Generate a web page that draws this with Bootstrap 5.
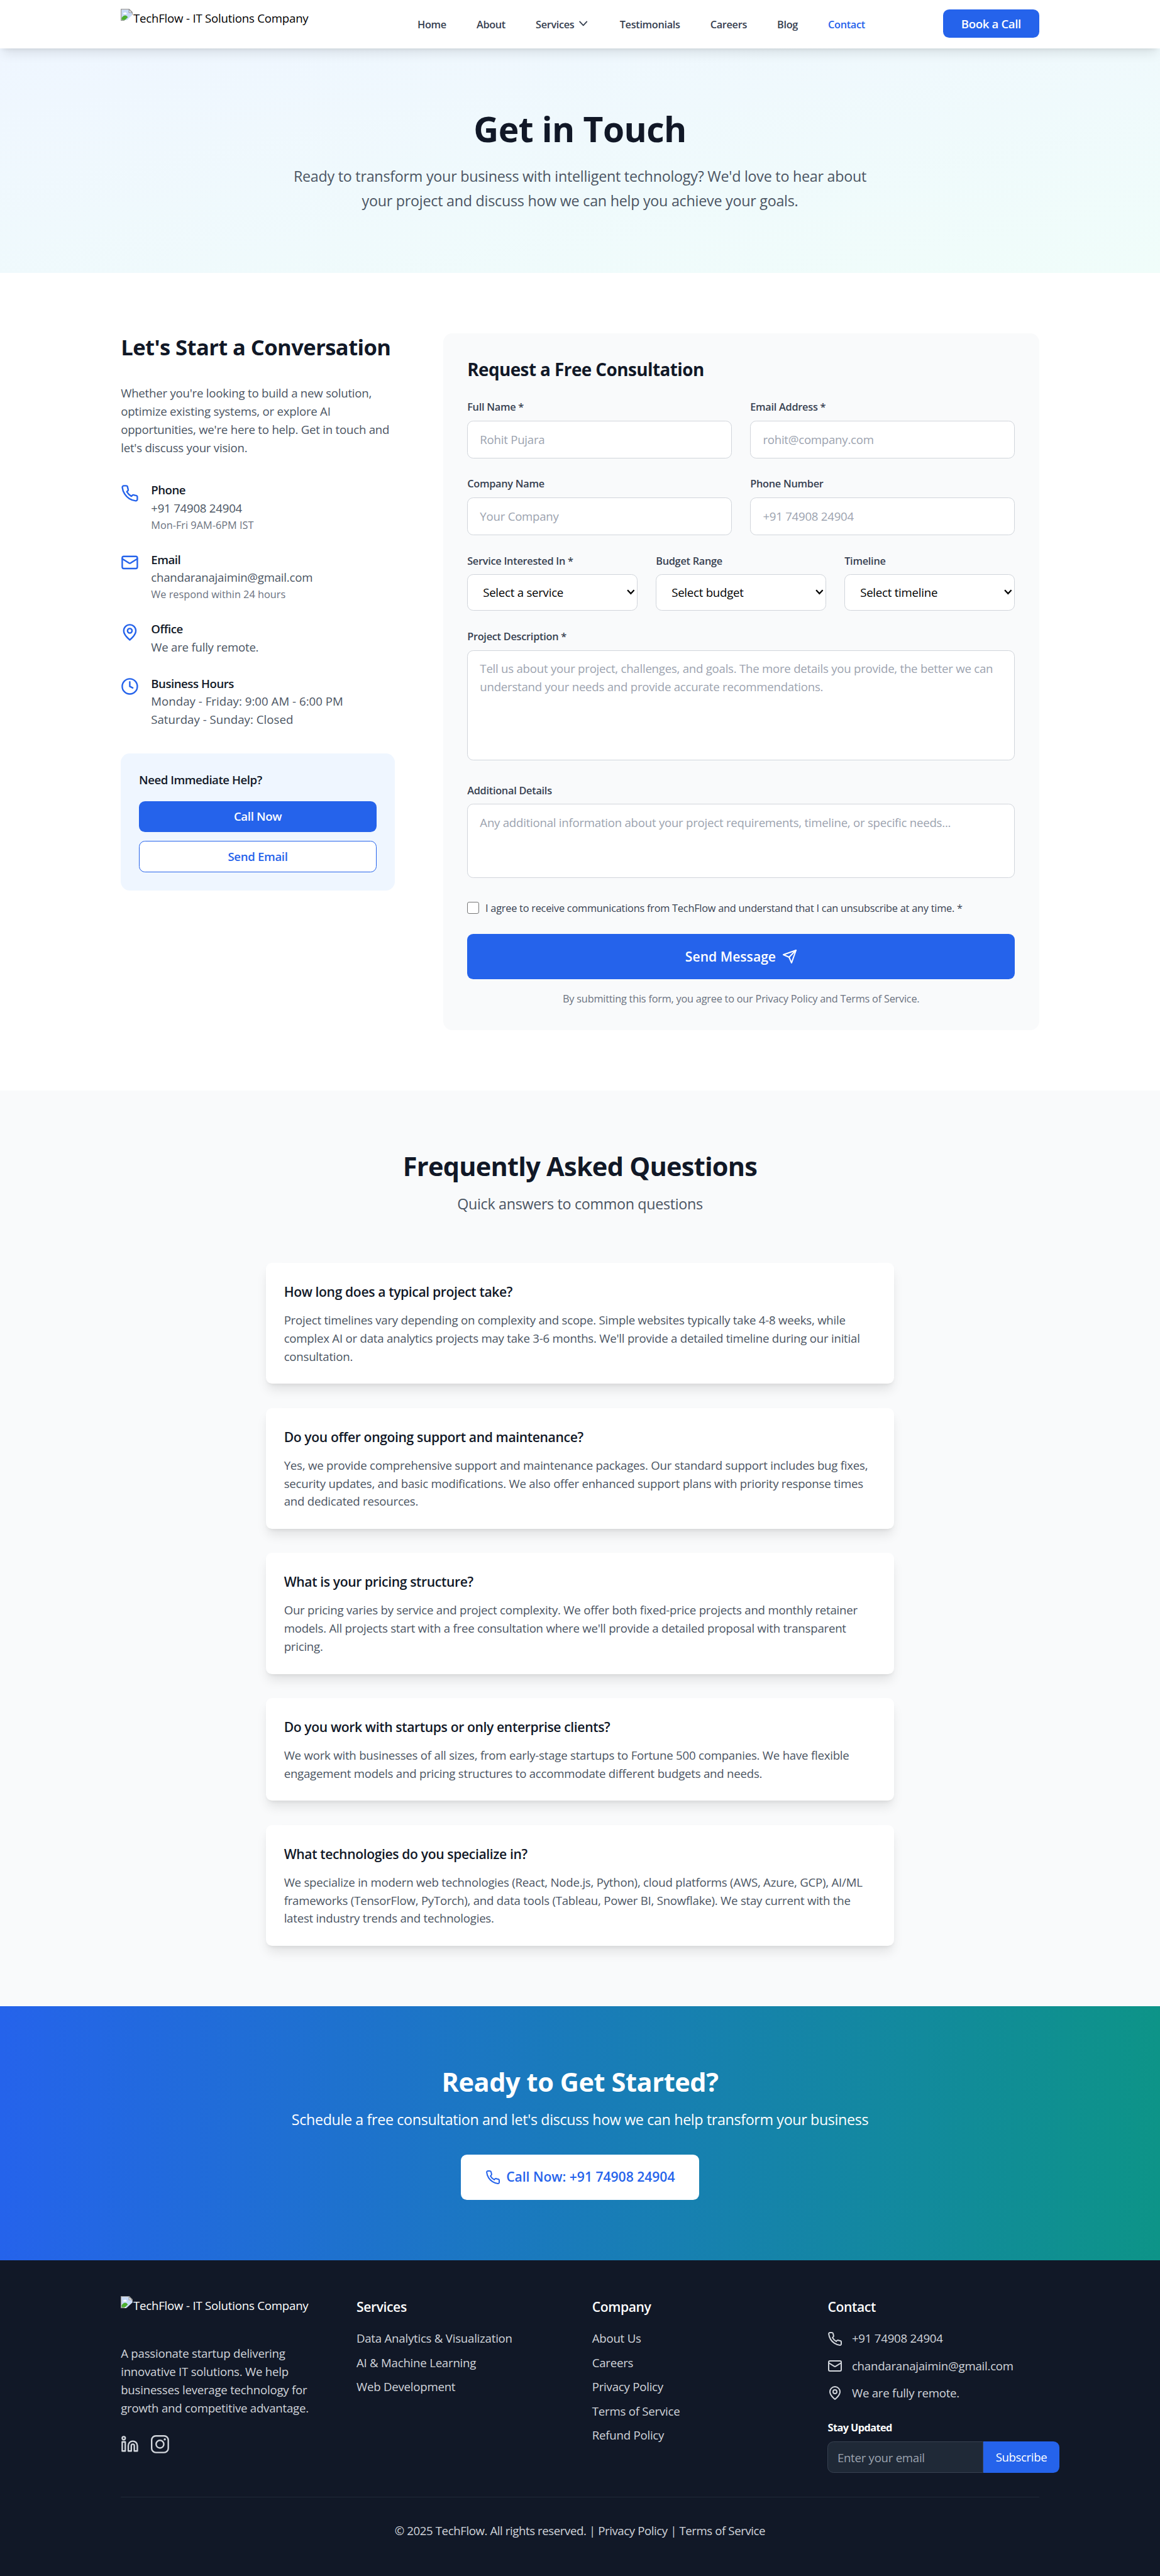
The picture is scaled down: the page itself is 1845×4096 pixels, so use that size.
<!DOCTYPE html>
<html lang="en">
<head>
<meta charset="utf-8">
<meta name="viewport" content="width=device-width, initial-scale=1">
<title>Contact - TechFlow</title>
<link href="https://cdn.jsdelivr.net/npm/bootstrap@5.3.0/dist/css/bootstrap.min.css" rel="stylesheet">
<style>
:root{--ink:#111827;--g7:#374151;--g6:#4b5563;--g5:#6b7280;--brand:#2563eb;--soft:#f9fafb;--line:#d1d5db}
html{font-size:19.21875px;overflow:hidden}
body{font-family:"Open Sans","Noto Sans",sans-serif;font-size:.97rem;line-height:1.5rem;letter-spacing:-.012em;color:#000;background:#fff}
a{text-decoration:none;color:inherit}
h1,h2,h3,h4,p,ul{margin:0}
svg{flex:none;fill:none;stroke:currentColor;stroke-width:2;stroke-linecap:round;stroke-linejoin:round}
.shell{width:76rem;margin:0 auto}
.i24{width:1.5rem;height:1.5rem}
.i20{width:1.25rem;height:1.25rem}
.brand-text{color:var(--brand)}
.t6{color:var(--g6)}
.t14{font-size:.8488rem;line-height:1.25rem}
.semi{font-weight:600;letter-spacing:-.019em}
.lift{box-shadow:0 .625rem .9375rem -.1875rem rgba(0,0,0,.1),0 .25rem .375rem -.25rem rgba(0,0,0,.1)}
.solid{background:var(--brand);color:#fff}
.rounded-8{border-radius:.5rem}

.topbar{height:4rem;background:#fff;z-index:2}
.alt-logo{height:2.5rem;width:18.1rem;white-space:nowrap;letter-spacing:-.011em}
.alt-logo svg{width:1rem;height:1rem;stroke:none}
.alt-logo span{line-height:1.6rem;margin-left:.03rem}
.menu{gap:2.5rem;font-size:.8488rem;color:var(--g7);font-weight:550;letter-spacing:-.02em;padding-top:.15rem}
.menu svg{width:.7rem;height:.7rem;stroke-width:1.6;margin:-.25rem .16rem 0 .4rem}
.book{padding:.5rem 1.5rem;line-height:1.33rem;margin-top:-.06rem}

.hero{background:linear-gradient(to bottom right,#eff6ff,#f0fdfa);padding:5.1rem 0 4rem;height:18.5625rem}
.hero h1{font-size:2.87rem;font-weight:700;line-height:3.14rem;margin-bottom:1.33rem;letter-spacing:-.01em;color:var(--ink)}
.hero p{font-size:1.2125rem;line-height:2.03125rem;width:48rem;letter-spacing:-.011em}
.main-pad{padding:5rem 0}

.talk{width:22.6667rem}
.talk h2{font-size:1.8rem;line-height:2.25rem;font-weight:700;color:var(--ink);margin-bottom:2rem;letter-spacing:-.017em;white-space:nowrap}
.talk h4{font-size:.97rem;line-height:1.5rem;color:var(--ink);letter-spacing:-.025em}
.talk .i24{margin-top:.25rem}
.talk .t14{letter-spacing:0;color:var(--g5)}
.hours{letter-spacing:.002em}
.helpbox{background:#eff6ff;border-radius:.75rem;padding:1.5rem}
.wide-btn{display:block;text-align:center;padding:.5rem 1rem}
.wide-btn + .wide-btn{margin-top:.75rem}
.outline-b{background:#fff;border:1px solid var(--brand);color:var(--brand)}

.panel{width:49.3333rem;background:var(--soft);border-radius:.75rem;padding:2rem}
.panel h3{font-size:1.45rem;line-height:2rem;font-weight:700;color:var(--ink);margin-bottom:1.5rem;letter-spacing:-.02em}
.panel label.cap{display:block;font-size:.8488rem;line-height:1.25rem;font-weight:550;color:var(--g7);letter-spacing:-.016em;margin-bottom:.5rem}
.panel .form-control,.panel select{width:100%;height:3.1rem;border:1px solid var(--line);border-radius:.5rem;padding:.75rem 1rem;font-size:.97rem;line-height:1.5rem;letter-spacing:-.013em;background:#fff;color:#000;display:block}
.panel select{appearance:none;height:3.03rem;padding:.7rem 1.25rem}
.panel textarea.form-control{resize:none}
.panel textarea.tall{height:9.1rem}
.panel textarea.short{height:6.1rem}
.panel .form-control::placeholder{color:#9ca3af;opacity:1}
.area{margin-bottom:.375rem}
.pick svg{position:absolute;right:.25rem;top:50%;width:.66rem;height:.66rem;margin-top:-.36rem;stroke:#000;stroke-width:2.1;stroke-linecap:butt;stroke-linejoin:miter}
.agree{color:var(--g7)}
.fine{color:var(--g5)}
.tick{width:1rem;height:1rem;border:1px solid #767676;border-radius:.16rem;background:#fff;appearance:none;margin:0}
.send{width:100%;border:0;height:3.75rem;font-size:1.1rem;line-height:1.75rem;font-weight:600}

.faq{background:var(--soft);padding:5rem 0}
.big{font-size:2.16rem;line-height:2.6rem;font-weight:700;letter-spacing:-.018em;margin-bottom:.9rem}
.faq .big{color:var(--ink)}
.sub20{font-size:1.2125rem;line-height:1.75rem;letter-spacing:-.014em}
.faq-list{width:52rem;margin:4rem auto 0;gap:2rem}
.qa{background:#fff;border-radius:.5rem;padding:1.5rem}
.qa h3{font-size:1.1rem;line-height:1.75rem;font-weight:600;margin-bottom:.75rem;color:var(--ink);letter-spacing:-.018em}

.cta{background:linear-gradient(to right,#2563eb,#0d9488);padding:5rem 0;height:21rem;color:#fff}
.cta .big{letter-spacing:-.01em}
.cta .sub20{margin-bottom:2rem;letter-spacing:-.016em}
.call{background:#fff;color:var(--brand);height:3.75rem;width:19.7rem;font-size:1.1rem;font-weight:600;letter-spacing:-.001em}

.foot{background:var(--ink);color:#fff;padding:3rem 0 4rem}
.foot-cols{gap:2rem}
.foot-cols>div{width:17.5rem}
.foot h3{font-size:1.1rem;line-height:1.75rem;font-weight:600;margin-bottom:1rem;letter-spacing:-.019em}
.foot h4{font-weight:700;letter-spacing:-.035em;margin:1.5rem 0 .5rem}
.dim{color:var(--line)}
.gap-12{gap:.75rem}
.news{width:19.15rem}
.news input{width:12.9rem;height:2.6rem;background:#1f2937;border:1px solid #374151;border-radius:.5rem 0 0 .5rem;padding:.5rem .75rem;letter-spacing:-.0145em;font-size:.97rem;color:#fff}
.news input::placeholder{color:#9ca3af}
.news button{width:6.25rem;border:0;border-radius:0 .5rem .5rem 0;font-weight:500;font-size:.97rem;letter-spacing:-.02em;padding:0}
.legal{border-top:1px solid #1f2937;margin-top:2rem;padding-top:2rem;letter-spacing:-.022em}
</style>
</head>
<body>
<svg class="d-none" xmlns="http://www.w3.org/2000/svg">
  <symbol id="phone" viewBox="0 0 24 24"><path d="M22 16.92v3a2 2 0 0 1-2.18 2 19.79 19.79 0 0 1-8.63-3.07 19.5 19.5 0 0 1-6-6 19.79 19.79 0 0 1-3.07-8.67A2 2 0 0 1 4.11 2h3a2 2 0 0 1 2 1.72 12.84 12.84 0 0 0 .7 2.81 2 2 0 0 1-.45 2.11L8.09 9.91a16 16 0 0 0 6 6l1.27-1.27a2 2 0 0 1 2.11-.45 12.84 12.84 0 0 0 2.81.7A2 2 0 0 1 22 16.92z"/></symbol>
  <symbol id="mail" viewBox="0 0 24 24"><rect width="20" height="16" x="2" y="4" rx="2"/><path d="m22 7-8.97 5.7a1.94 1.94 0 0 1-2.06 0L2 7"/></symbol>
  <symbol id="pin" viewBox="0 0 24 24"><path d="M20 10c0 6-8 12-8 12s-8-6-8-12a8 8 0 0 1 16 0Z"/><circle cx="12" cy="10" r="3"/></symbol>
  <symbol id="clock" viewBox="0 0 24 24"><circle cx="12" cy="12" r="10"/><path d="M12 6v6l4 2"/></symbol>
  <symbol id="plane" viewBox="0 0 24 24"><path d="m22 2-7 20-4-9-9-4Z"/><path d="M22 2 11 13"/></symbol>
  <symbol id="chev" viewBox="0 0 12 12"><path d="M1 3l5 5.4L11 3"/></symbol>
  <symbol id="missing" viewBox="0 0 16 16"><path fill="#fff" d="M0 0h11l5 5v3L7 16H0z"/><path fill="#c6d9f7" d="M1.2 1.2H11V5h3.800v3.500L8.500 14.800H1.200z"/><path fill="#fff" d="M3.2 6.6c0-1 .9-1.6 1.7-1.3.4-1 1.900-.9 2.200.1.9 0 1.300 1.200.500 1.600H3.800z"/><path fill="#4caf2f" d="M1.200 14.800V12c2-2.800 4.600-4 6.600-2.600l1.700 1.700-3.700 3.700z"/><path fill="#fff" d="M11 1.200V5h3.800z"/><path fill="#9a9a9a" d="M0 0h11.400L16 4.600V8h-1.100V5.500H10.500V1.100H1.100v13.800H5V16H0zM11.500 2v2.500H14z"/></symbol>
</svg>

<header class="topbar lift position-relative">
  <div class="shell d-flex justify-content-between h-100 align-items-center">
    <a href="#" class="alt-logo d-flex align-items-start"><svg><use href="#missing"/></svg><span>TechFlow - IT Solutions Company</span></a>
    <nav class="menu d-flex align-items-center">
      <a href="#">Home</a><a href="#">About</a><a href="#" class="d-flex align-items-center">Services<svg><use href="#chev"/></svg></a><a href="#">Testimonials</a><a href="#">Careers</a><a href="#">Blog</a><a href="#" class="brand-text">Contact</a>
    </nav>
    <a href="#" class="book solid rounded-8 semi">Book a Call</a>
  </div>
</header>

<section class="hero text-center">
  <h1>Get in Touch</h1>
  <p class="t6 mx-auto">Ready to transform your business with intelligent technology? We'd love to hear about<br>your project and discuss how we can help you achieve your goals.</p>
</section>

<section class="main-pad">
  <div class="shell d-flex justify-content-between align-items-start">
    <div class="talk">
      <h2>Let's Start a Conversation</h2>
      <p class="t6 text-nowrap">Whether you're looking to build a new solution,<br>optimize existing systems, or explore AI<br>opportunities, we're here to help. Get in touch and<br>let's discuss your vision.</p>
      <div class="d-flex flex-column gap-4 my-4 py-2">
        <div class="d-flex gap-3"><svg class="i24 brand-text"><use href="#phone"/></svg><div class="t6"><h4 class="semi">Phone</h4>+91 74908 24904<div class="t14">Mon-Fri 9AM-6PM IST</div></div></div>
        <div class="d-flex gap-3"><svg class="i24 brand-text"><use href="#mail"/></svg><div class="t6"><h4 class="semi">Email</h4>chandaranajaimin@gmail.com<div class="t14">We respond within 24 hours</div></div></div>
        <div class="d-flex gap-3"><svg class="i24 brand-text"><use href="#pin"/></svg><div class="t6"><h4 class="semi">Office</h4>We are fully remote.</div></div>
        <div class="d-flex gap-3"><svg class="i24 brand-text"><use href="#clock"/></svg><div class="t6 hours"><h4 class="semi">Business Hours</h4>Monday - Friday: 9:00 AM - 6:00 PM<br>Saturday - Sunday: Closed</div></div>
      </div>
      <div class="helpbox">
        <h4 class="semi mb-3">Need Immediate Help?</h4>
        <a href="#" class="wide-btn solid rounded-8 semi">Call Now</a>
        <a href="#" class="wide-btn outline-b rounded-8 semi">Send Email</a>
      </div>
    </div>

    <form class="panel">
      <h3>Request a Free Consultation</h3>
      <div class="d-flex flex-column gap-4">
        <div class="d-flex gap-4">
          <div class="w-50"><label class="cap">Full Name *</label><input class="form-control" placeholder="Rohit Pujara"></div>
          <div class="w-50"><label class="cap">Email Address *</label><input class="form-control" placeholder="rohit@company.com"></div>
        </div>
        <div class="d-flex gap-4">
          <div class="w-50"><label class="cap">Company Name</label><input class="form-control" placeholder="Your Company"></div>
          <div class="w-50"><label class="cap">Phone Number</label><input class="form-control" placeholder="+91 74908 24904"></div>
        </div>
        <div class="d-flex gap-4">
          <div class="w-100"><label class="cap">Service Interested In *</label><div class="pick position-relative"><select><option>Select a service</option></select><svg><use href="#chev"/></svg></div></div>
          <div class="w-100"><label class="cap">Budget Range</label><div class="pick position-relative"><select><option>Select budget</option></select><svg><use href="#chev"/></svg></div></div>
          <div class="w-100"><label class="cap">Timeline</label><div class="pick position-relative"><select><option>Select timeline</option></select><svg><use href="#chev"/></svg></div></div>
        </div>
        <div class="area"><label class="cap">Project Description *</label><textarea class="form-control tall" placeholder="Tell us about your project, challenges, and goals. The more details you provide, the better we can understand your needs and provide accurate recommendations."></textarea></div>
        <div class="area"><label class="cap">Additional Details</label><textarea class="form-control short" placeholder="Any additional information about your project requirements, timeline, or specific needs..."></textarea></div>
      </div>
      <div class="agree d-flex align-items-center gap-2 t14 mt-4 mb-4"><input type="checkbox" class="tick"><span>I agree to receive communications from TechFlow and understand that I can unsubscribe at any time. *</span></div>
      <button type="button" class="send solid rounded-8 d-flex justify-content-center align-items-center gap-2">Send Message <svg class="i20"><use href="#plane"/></svg></button>
      <div class="fine t14 text-center mt-3">By submitting this form, you agree to our Privacy Policy and Terms of Service.</div>
    </form>
  </div>
</section>

<section class="faq">
  <div class="text-center"><h2 class="big">Frequently Asked Questions</h2><p class="sub20 t6">Quick answers to common questions</p></div>
  <div class="faq-list d-flex flex-column t6">
    <div class="qa lift"><h3>How long does a typical project take?</h3>Project timelines vary depending on complexity and scope. Simple websites typically take 4-8 weeks, while<br>complex AI or data analytics projects may take 3-6 months. We'll provide a detailed timeline during our initial<br>consultation.</div>
    <div class="qa lift"><h3>Do you offer ongoing support and maintenance?</h3>Yes, we provide comprehensive support and maintenance packages. Our standard support includes bug fixes,<br>security updates, and basic modifications. We also offer enhanced support plans with priority response times<br>and dedicated resources.</div>
    <div class="qa lift"><h3>What is your pricing structure?</h3>Our pricing varies by service and project complexity. We offer both fixed-price projects and monthly retainer<br>models. All projects start with a free consultation where we'll provide a detailed proposal with transparent<br>pricing.</div>
    <div class="qa lift"><h3>Do you work with startups or only enterprise clients?</h3>We work with businesses of all sizes, from early-stage startups to Fortune 500 companies. We have flexible<br>engagement models and pricing structures to accommodate different budgets and needs.</div>
    <div class="qa lift"><h3>What technologies do you specialize in?</h3>We specialize in modern web technologies (React, Node.js, Python), cloud platforms (AWS, Azure, GCP), AI/ML<br>frameworks (TensorFlow, PyTorch), and data tools (Tableau, Power BI, Snowflake). We stay current with the<br>latest industry trends and technologies.</div>
  </div>
</section>

<section class="cta text-center">
  <h2 class="big">Ready to Get Started?</h2>
  <p class="sub20">Schedule a free consultation and let's discuss how we can help transform your business</p>
  <a href="#" class="call rounded-8 d-flex mx-auto justify-content-center align-items-center gap-2"><svg class="i20"><use href="#phone"/></svg>Call Now: +91 74908 24904</a>
</section>

<footer class="foot">
  <div class="shell">
    <div class="foot-cols d-flex">
      <div>
        <a href="#" class="alt-logo d-flex align-items-start mb-4"><svg><use href="#missing"/></svg><span>TechFlow - IT Solutions Company</span></a>
        <p class="dim text-nowrap mb-4">A passionate startup delivering<br>innovative IT solutions. We help<br>businesses leverage technology for<br>growth and competitive advantage.</p>
        <div class="d-flex gap-3 dim">
          <svg class="i24" viewBox="0 0 24 24"><path d="M16 8a6 6 0 0 1 6 6v7h-4v-7a2 2 0 0 0-4 0v7h-4v-7a6 6 0 0 1 6-6z"/><rect x="2" y="9" width="4" height="12"/><circle cx="4" cy="4" r="2"/></svg>
          <svg class="i24" viewBox="0 0 24 24"><rect x="1" y="1" width="22" height="22" rx="5.500"/><circle cx="12" cy="12" r="5.100"/><circle cx="18.400" cy="5.600" r="1.450" fill="currentColor" stroke="none"/></svg>
        </div>
      </div>
      <div>
        <h3>Services</h3>
        <ul class="list-unstyled dim d-flex flex-column gap-2"><li>Data Analytics &amp; Visualization</li><li>AI &amp; Machine Learning</li><li>Web Development</li></ul>
      </div>
      <div>
        <h3>Company</h3>
        <ul class="list-unstyled dim d-flex flex-column gap-2"><li>About Us</li><li>Careers</li><li>Privacy Policy</li><li>Terms of Service</li><li>Refund Policy</li></ul>
      </div>
      <div>
        <h3>Contact</h3>
        <div class="dim d-flex flex-column gap-12">
          <div class="d-flex align-items-center gap-12"><svg class="i20"><use href="#phone"/></svg>+91 74908 24904</div>
          <div class="d-flex align-items-center gap-12"><svg class="i20"><use href="#mail"/></svg>chandaranajaimin@gmail.com</div>
          <div class="d-flex align-items-center gap-12"><svg class="i20"><use href="#pin"/></svg>We are fully remote.</div>
        </div>
        <h4 class="t14">Stay Updated</h4>
        <div class="news d-flex"><input type="email" placeholder="Enter your email"><button type="button" class="solid">Subscribe</button></div>
      </div>
    </div>
    <div class="legal text-center dim">© 2025 TechFlow. All rights reserved. | Privacy Policy | Terms of Service</div>
  </div>
</footer>
<script src="https://cdn.jsdelivr.net/npm/bootstrap@5.3.0/dist/js/bootstrap.bundle.min.js"></script>
</body>
</html>
